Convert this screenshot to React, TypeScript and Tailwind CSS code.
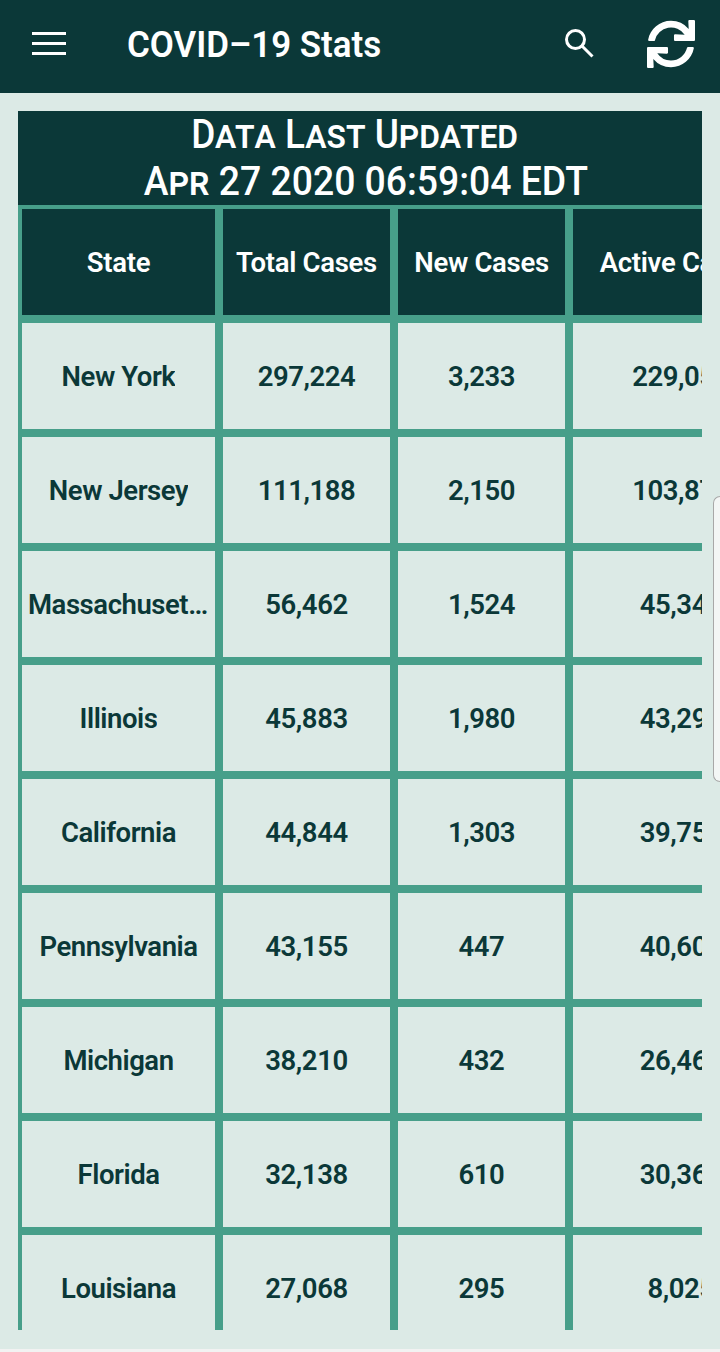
import { FaSync } from 'react-icons/fa';

const rows = [
  ['New York', '297,224', '3,233', '229,057'],
  ['New Jersey', '111,188', '2,150', '103,877'],
  ['Massachusetts', '56,462', '1,524', '45,345'],
  ['Illinois', '45,883', '1,980', '43,294'],
  ['California', '44,844', '1,303', '39,758'],
  ['Pennsylvania', '43,155', '447', '40,603'],
  ['Michigan', '38,210', '432', '26,468'],
  ['Florida', '32,138', '610', '30,367'],
  ['Louisiana', '27,068', '295', '8,025'],
];

const headers = ['State', 'Total Cases', 'New Cases', 'Active Cases'];

export default function App() {
  return (
    <div className="relative flex h-[1352px] flex-col overflow-hidden bg-[#dceae6] font-['Roboto',sans-serif]">
      <header className="flex h-[93px] shrink-0 items-center bg-[#0b3838] pl-[32px] pr-[25px] text-white">
        <svg width="34" height="24" viewBox="0 0 34 24" fill="#fff" className="mb-[5px]">
          <rect x="0" y="0" width="34" height="3" />
          <rect x="0" y="10" width="34" height="3" />
          <rect x="0" y="20" width="34" height="3" />
        </svg>
        <h1 className="mb-[3px] ml-[61px] flex-1 origin-left scale-x-[0.97] text-[36px] font-semibold whitespace-nowrap">COVID–19 Stats</h1>
        <svg width="32" height="32" viewBox="0 0 32 32" fill="none" stroke="#fff" strokeWidth="3" className="mb-[7px] mr-[52px]">
          <circle cx="12.5" cy="12.5" r="9" />
          <path d="M19 19 L29.5 29.5" />
        </svg>
        <FaSync size={48} className="mb-[5px]" />
      </header>

      <main className="min-h-0 flex-1 pl-[18px] pr-[18px] pt-[18px] pb-[19px]">
        <div className="flex h-full flex-col overflow-hidden">
          <div className="h-[94px] shrink-0 bg-[#0b3838] text-center text-[41px] leading-[47px] font-medium text-white [font-variant:small-caps]">
            <div className="scale-x-[0.9] whitespace-nowrap pr-[12px]">Data Last Updated</div>
            <div className="scale-x-[0.91] whitespace-nowrap pl-[13px]">Apr 27 2020 06:59:04 EDT</div>
          </div>
          <div className="min-h-0 flex-1 overflow-hidden">
            <div className="grid w-[775px] grid-cols-[193px_167px_167px_216px] gap-[8px] bg-[#479f8a] pl-[4px] pt-[4px]">
              {headers.map((h, i) => (
                <div key={h} className={`flex h-[106px] items-center justify-center bg-[#0b3838] pt-[1px] text-[27.5px] font-semibold tracking-[-0.3px] whitespace-nowrap text-white ${i === 3 ? 'pr-[6px]' : ''}`}>
                  {h}
                </div>
              ))}
              {rows.map((r) => r.map((v, i) => (
                <div key={r[0] + i} className="flex h-[106px] items-center justify-center bg-[#dceae6] px-[6px] pt-[2px] text-[27.5px] font-semibold tracking-[-0.45px] text-[#0b3838]">
                  <span className={i === 0 ? 'truncate' : ''}>{v}</span>
                </div>
              )))}
            </div>
          </div>
        </div>
      </main>

      <div className="h-[3px] shrink-0 bg-[#f2f2f2]" />
      <div className="absolute right-0 top-[496px] h-[286px] w-[7px] rounded-l-[8px] border border-r-0 border-[#a8a8a8] bg-[#f3f6f5]" />
    </div>
  );
}
